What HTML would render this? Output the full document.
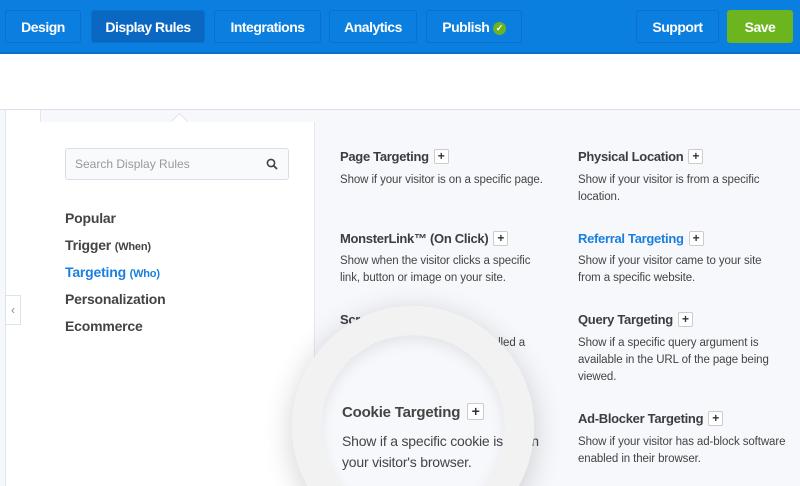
<!DOCTYPE html><html><head><style>
html,body{margin:0;width:800px;height:486px;overflow:hidden}
body{font-family:"Liberation Sans",sans-serif;background:#fff;position:relative}
.bar{position:absolute;left:0;top:0;width:800px;height:52px;background:#0a7fe0;border-bottom:2px solid #0c6fc9}
.b{position:absolute;top:10px;height:33px;border:1px solid #0b6fcc;border-radius:3px;color:#fff;font-weight:bold;font-size:14px;line-height:33px;text-align:center;box-sizing:border-box;letter-spacing:-0.5px}
.p{position:absolute;color:#444;font-size:11.5px;line-height:17px;letter-spacing:-0.1px}
.h{position:absolute;color:#3c3c44;font-weight:bold;font-size:13px;letter-spacing:-0.3px}
.plus{display:inline-block;width:13px;height:13px;border:1px solid #ccc;border-radius:2px;background:#fff;text-align:center;line-height:12px;font-size:12px;margin-left:5px;vertical-align:1px;color:#333;letter-spacing:0}
.nav{position:absolute;left:65px;font-weight:bold;font-size:14px;color:#444;letter-spacing:-0.2px}
.nav small{font-size:11px}
</style></head><body>
<div class="bar">
<div class="b" style="left:5px;width:76px">Design</div>
<div class="b" style="left:91px;width:114px;background:#0a68c2">Display Rules</div>
<div class="b" style="left:214px;width:107px">Integrations</div>
<div class="b" style="left:329px;width:88px">Analytics</div>
<div class="b" style="left:426px;width:96px">Publish <span style="display:inline-block;width:13px;height:13px;border-radius:50%;background:#6cb31f;font-size:9px;line-height:13px;vertical-align:1px">✓</span></div>
<div class="b" style="left:636px;width:83px">Support</div>
<div class="b" style="left:727px;width:66px;background:#6db51f;border-color:#6db51f">Save</div>
</div>
<div style="position:absolute;left:0;top:109px;width:800px;height:1px;background:#d8e0ea"></div>
<div style="position:absolute;left:0;top:110px;width:800px;height:376px;background:#f6f8fb"></div>
<div style="position:absolute;left:5px;top:110px;width:34px;height:376px;background:#fff;border-left:1px solid #e0e6ee;border-right:1px solid #e0e6ee"></div>
<div style="position:absolute;left:5px;top:295px;width:14px;height:28px;background:#fff;border:1px solid #dde3ea;color:#888;font-size:12px;line-height:28px;text-align:center">‹</div>
<div style="position:absolute;left:40px;top:122px;width:274px;height:364px;background:#fff;border-right:1px solid #e3e8ef"></div>
<div style="position:absolute;left:174px;top:115px;width:10px;height:10px;background:#fff;transform:rotate(45deg);border-left:1px solid #dde3ea;border-top:1px solid #dde3ea"></div>
<div style="position:absolute;left:65px;top:148px;width:224px;height:32px;border:1px solid #d8dee6;border-radius:3px;box-sizing:border-box;background:#f9fafc;font-size:12px;color:#999;line-height:30px;padding-left:9px">Search Display Rules
<svg style="position:absolute;right:10px;top:9px" width="12" height="12" viewBox="0 0 12 12"><circle cx="5" cy="5" r="3.6" fill="none" stroke="#444" stroke-width="1.6"/><path d="M7.6 7.6L11 11" stroke="#444" stroke-width="1.8"/></svg></div>
<div class="nav" style="top:210px">Popular</div>
<div class="nav" style="top:237px">Trigger <small>(When)</small></div>
<div class="nav" style="top:264px;color:#1a7fde">Targeting <small>(Who)</small></div>
<div class="nav" style="top:291px">Personalization</div>
<div class="nav" style="top:318px">Ecommerce</div>

<div class="h" style="left:340px;top:149px">Page Targeting<span class="plus">+</span></div>
<div class="p" style="left:340px;top:172px">Show if your visitor is on a specific page.</div>
<div class="h" style="left:340px;top:231px">MonsterLink™ (On Click)<span class="plus">+</span></div>
<div class="p" style="left:340px;top:253px;width:205px">Show when the visitor clicks a specific link, button or image on your site.</div>
<div class="h" style="left:340px;top:312px">Scroll Distance<span class="plus">+</span></div>
<div class="p" style="left:340px;top:335px;width:200px">Show if the page has been scrolled a certain amount.</div>

<div class="h" style="left:578px;top:149px">Physical Location<span class="plus">+</span></div>
<div class="p" style="left:578px;top:172px;width:200px">Show if your visitor is from a specific location.</div>
<div class="h" style="left:578px;top:231px;color:#1a7fde">Referral Targeting<span class="plus">+</span></div>
<div class="p" style="left:578px;top:253px;width:200px">Show if your visitor came to your site from a specific website.</div>
<div class="h" style="left:578px;top:312px">Query Targeting<span class="plus">+</span></div>
<div class="p" style="left:578px;top:335px;width:210px">Show if a specific query argument is available in the URL of the page being viewed.</div>
<div class="h" style="left:578px;top:411px">Ad-Blocker Targeting<span class="plus">+</span></div>
<div class="p" style="left:578px;top:434px;width:222px">Show if your visitor has ad-block software enabled in their browser.</div>

<div style="position:absolute;left:0;top:0;width:800px;height:486px;overflow:hidden">
<div style="position:absolute;left:321px;top:335px;width:184px;height:184px;border-radius:50%;background:#f6f8fb"></div>
<div style="position:absolute;left:342px;top:403px;color:#444;font-weight:bold;font-size:15px;white-space:nowrap;letter-spacing:-0.2px">Cookie Targeting<span class="plus" style="width:15px;height:15px;line-height:14px;font-size:14px;margin-left:7px">+</span></div>
<div style="position:absolute;left:342px;top:431px;color:#444;font-size:14px;line-height:21px;width:240px;letter-spacing:-0.2px">Show if a specific cookie is set in<br>your visitor's browser.</div>
<div style="position:absolute;left:292px;top:306px;width:242px;height:242px;border-radius:50%;box-sizing:border-box;border:29px solid #f2f2f3;box-shadow:0 6px 30px rgba(0,0,0,.18),inset 0 6px 14px rgba(0,0,0,.08)"></div>
</div>
</body></html>
